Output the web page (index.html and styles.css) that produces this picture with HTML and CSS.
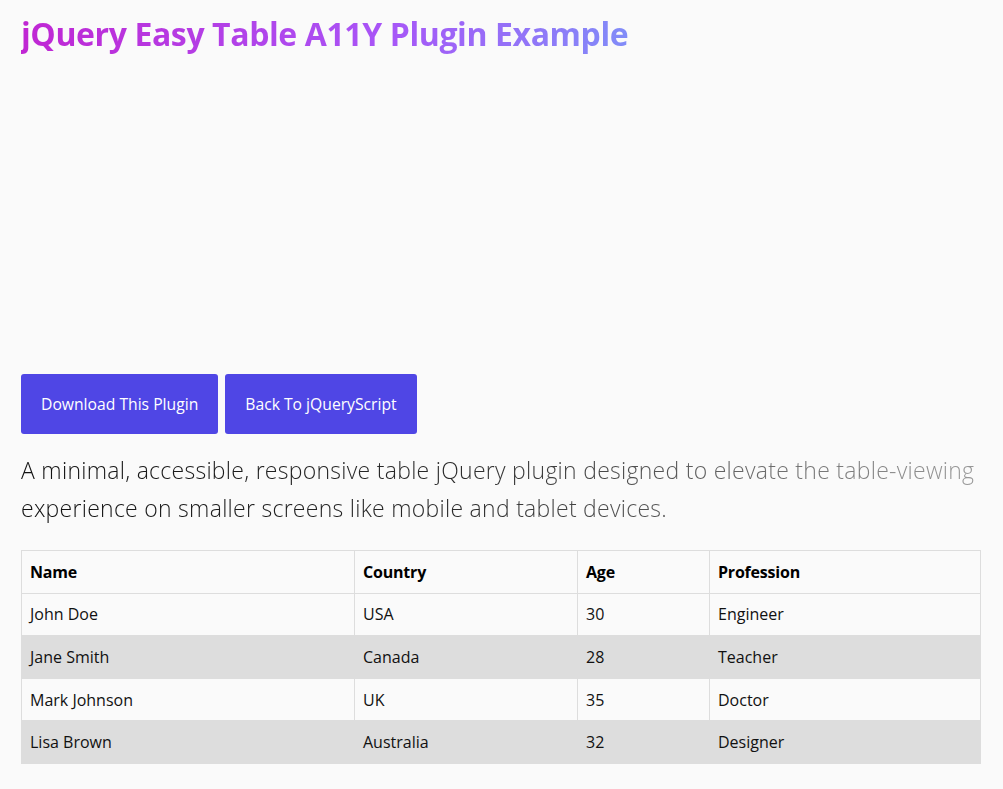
FILE: index.html
```html
<!DOCTYPE html>
<html lang="en">
<head>
<meta charset="utf-8">
<title>jQuery Easy Table A11Y Plugin Example</title>
<link rel="stylesheet" href="styles.css">
</head>
<body>
<div class="container">
  <h1 class="title">jQuery Easy Table A11Y Plugin Example</h1>
  <div class="ad-space"></div>
  <div class="buttons">
    <a class="btn" href="#">Download This Plugin</a>
    <a class="btn" href="#">Back To jQueryScript</a>
  </div>
  <p class="lead">A minimal, accessible, responsive table jQuery plugin designed to elevate the table-viewing experience on smaller screens like mobile and tablet devices.</p>
  <table class="data">
    <thead>
      <tr><th class="c1">Name</th><th class="c2">Country</th><th class="c3">Age</th><th class="c4">Profession</th></tr>
    </thead>
    <tbody>
      <tr><td>John Doe</td><td>USA</td><td>30</td><td>Engineer</td></tr>
      <tr><td>Jane Smith</td><td>Canada</td><td>28</td><td>Teacher</td></tr>
      <tr><td>Mark Johnson</td><td>UK</td><td>35</td><td>Doctor</td></tr>
      <tr><td>Lisa Brown</td><td>Australia</td><td>32</td><td>Designer</td></tr>
    </tbody>
  </table>
</div>
</body>
</html>
```
FILE: styles.css
```css
html, body {
  margin: 0;
  padding: 0;
  background: #fafafa;
}
body {
  font-family: "Open Sans", "Noto Sans", sans-serif;
  color: #111;
}
.container {
  padding: 0 22px 0 21px;
}
.title {
  margin: 0;
  padding-top: 14px;
  font-size: 32px;
  line-height: 40px;
  font-weight: 700;
  letter-spacing: -0.4px;
  display: inline-block;
  background: linear-gradient(90deg, #c026d3 0%, #a855f7 60%, #818cf8 100%);
  -webkit-background-clip: text;
  background-clip: text;
  color: transparent;
}
.ad-space {
  height: 320px;
}
.buttons {
  display: flex;
  gap: 7px;
}
.btn {
  display: block;
  background: #4f46e5;
  color: #fff;
  text-decoration: none;
  font-size: 15.7px;
  line-height: 20px;
  padding: 20px 20px;
  border-radius: 3px;
}
.lead {
  margin: 17px 0 23px;
  font-size: 23px;
  font-weight: 300;
  letter-spacing: 0.27px;
  line-height: 38px;
  background: linear-gradient(90deg, #111 0%, #2a2a2a 45%, #999 100%);
  -webkit-background-clip: text;
  background-clip: text;
  color: transparent;
}
.data {
  width: 960px;
  border-collapse: collapse;
  font-size: 16px;
}
.data th, .data td {
  border: 1px solid #ddd;
  padding: 0 8px;
  height: 41.6px;
  text-align: left;
}
.data th {
  font-weight: 700;
  color: #000;
  letter-spacing: -0.2px;
}
.data tbody tr:nth-child(even) td {
  background: #ddd;
  border-left-color: #ddd;
  border-right-color: #ddd;
}
.c1 { width: 316px; }
.c2 { width: 206px; }
.c3 { width: 115px; }
```
